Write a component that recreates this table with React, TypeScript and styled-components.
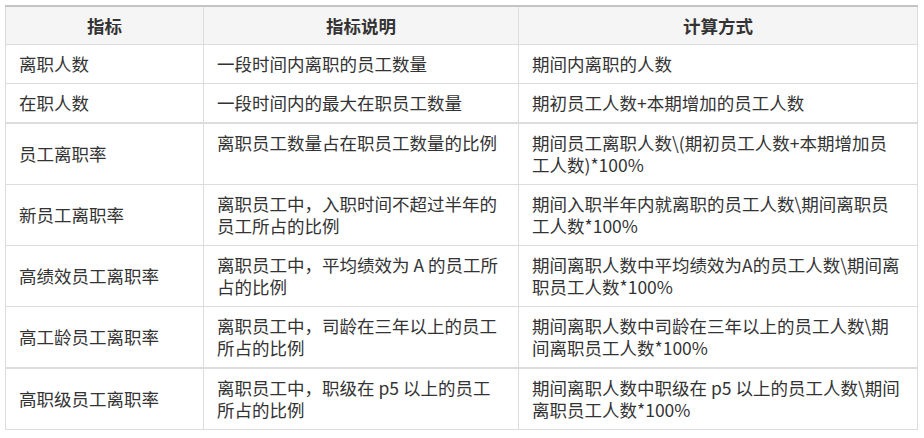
import React from 'react';
import styled, { createGlobalStyle } from 'styled-components';

const GlobalStyle = createGlobalStyle`
    body {
        margin: 0;
        background: #fff;
        font-family: "Noto Sans CJK SC", "Noto Sans", sans-serif;
    }
`;

const PageWrapper = styled.div`
    padding: 5px 8px 0 5px;
`;

const Table = styled.table`
    width: 912px;
    border-collapse: collapse;
    table-layout: fixed;
    border-top: 2px solid #c4c4c4;
    font-size: 17.5px;
    line-height: 22px;
    color: #333;
`;

const HeadCell = styled.th`
    background: #f5f5f5;
    border: 1px solid #dcdcdc;
    border-top: none;
    height: 37px;
    padding: 0 13px;
    font-weight: 700;
    text-align: center;
    color: #333;
`;

const Row = styled.tr<{ $thick?: boolean }>`
    border-bottom: ${props => (props.$thick ? 2 : 1)}px solid #dcdcdc;
`;

// first column is centred vertically, the text columns sit at the top
const Cell = styled.td<{ $top?: boolean }>`
    border-left: 1px solid #dcdcdc;
    border-right: 1px solid #dcdcdc;
    padding: 8px 13px 8px 13px;
    vertical-align: ${props => (props.$top ? 'top' : 'middle')};
    text-align: left;
    word-break: break-all;
`;

type Metric = {
    name: string;
    desc: string;
    formula: string;
    thick?: boolean;
};

const metrics: Metric[] = [
    { name: '离职人数', desc: '一段时间内离职的员工数量', formula: '期间内离职的人数' },
    {
        name: '在职人数',
        desc: '一段时间内的最大在职员工数量',
        formula: '期初员工人数+本期增加的员工人数',
        thick: true,
    },
    {
        name: '员工离职率',
        desc: '离职员工数量占在职员工数量的比例',
        formula: '期间员工离职人数\\(期初员工人数+本期增加员工人数)*100%',
    },
    {
        name: '新员工离职率',
        desc: '离职员工中，入职时间不超过半年的员工所占的比例',
        formula: '期间入职半年内就离职的员工人数\\期间离职员工人数*100%',
    },
    {
        name: '高绩效员工离职率',
        desc: '离职员工中，平均绩效为 A 的员工所占的比例',
        formula: '期间离职人数中平均绩效为A的员工人数\\期间离职员工人数*100%',
    },
    {
        name: '高工龄员工离职率',
        desc: '离职员工中，司龄在三年以上的员工所占的比例',
        formula: '期间离职人数中司龄在三年以上的员工人数\\期间离职员工人数*100%',
        thick: true,
    },
    {
        name: '高职级员工离职率',
        desc: '离职员工中，职级在 p5 以上的员工所占的比例',
        formula: '期间离职人数中职级在 p5 以上的员工人数\\期间离职员工人数*100%',
    },
];

const App = () => {
    return (
        <>
            <GlobalStyle />
            <PageWrapper>
                <Table>
                    <colgroup>
                        <col style={{ width: 198 }} />
                        <col style={{ width: 315 }} />
                        <col style={{ width: 399 }} />
                    </colgroup>
                    <thead>
                        <tr>
                            <HeadCell>指标</HeadCell>
                            <HeadCell>指标说明</HeadCell>
                            <HeadCell>计算方式</HeadCell>
                        </tr>
                    </thead>
                    <tbody>
                        {metrics.map(m => (
                            <Row key={m.name} $thick={m.thick}>
                                <Cell>{m.name}</Cell>
                                <Cell $top>{m.desc}</Cell>
                                <Cell $top>{m.formula}</Cell>
                            </Row>
                        ))}
                    </tbody>
                </Table>
            </PageWrapper>
        </>
    );
};

export default App;
